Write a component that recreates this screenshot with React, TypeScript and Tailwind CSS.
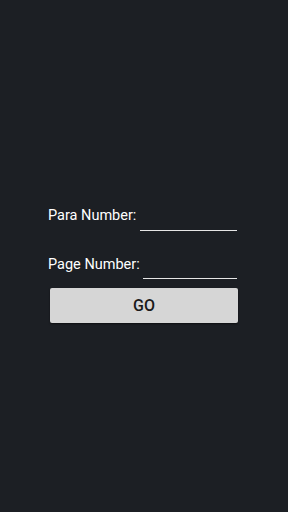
export default function App() {
  return (
    <div className="w-[288px] h-[512px] bg-[#1c1f24] overflow-hidden" style={{ fontFamily: 'Roboto, "Noto Sans", sans-serif' }}>
      <div className="pt-[207px] pl-[48px] pr-[50px] flex flex-col">
        <div className="flex items-end justify-between h-[18px] mr-[1px]">
          <span className="shrink-0 whitespace-nowrap text-[14.5px] leading-[18px] text-white">Para Number:</span>
          <div className="w-[97px] shrink-0 border-b-[1.5px] border-[#e6e6e6] mb-[-6px]" />
        </div>
        <div className="flex items-end justify-between h-[18px] mt-[31px] mr-[1px]">
          <span className="shrink-0 whitespace-nowrap text-[14.5px] leading-[18px] text-white">Page Number:</span>
          <div className="w-[94px] shrink-0 border-b-[1.5px] border-[#e6e6e6] mb-[-5px]" />
        </div>
        <button className="mt-[14px] ml-[2px] h-[35px] w-[188px] bg-[#d6d6d6] rounded-[2px] text-[#1a1a1a] text-[16px] font-medium shadow-[0_1px_2px_rgba(0,0,0,0.5)]">
          GO
        </button>
      </div>
    </div>
  );
}
